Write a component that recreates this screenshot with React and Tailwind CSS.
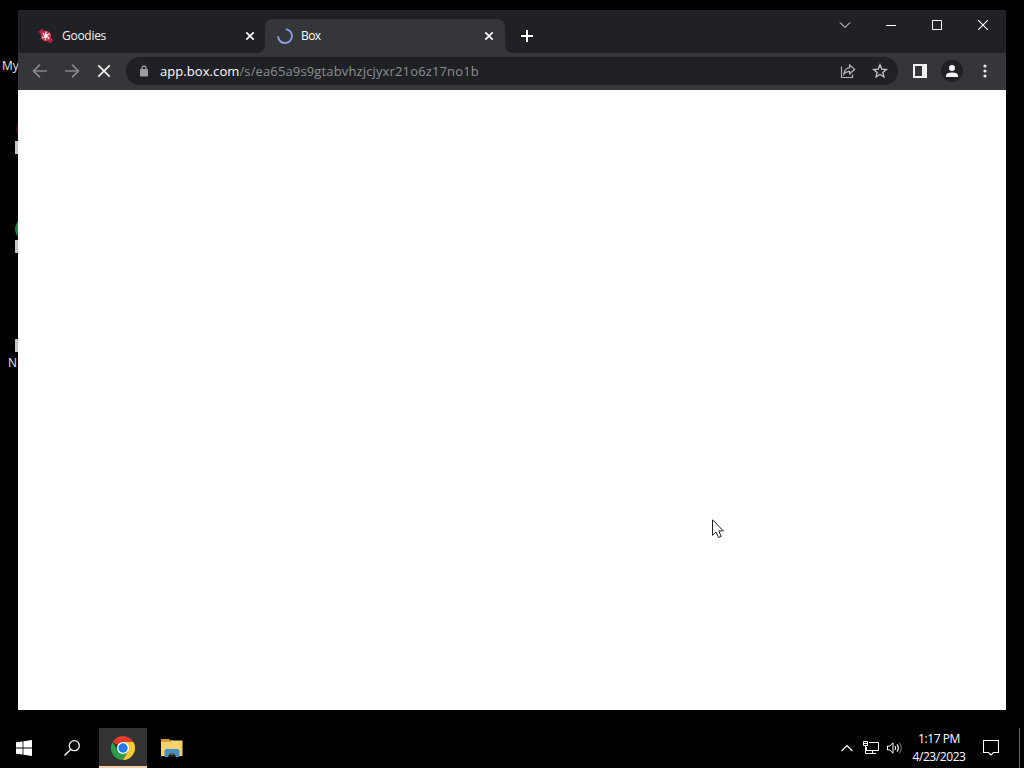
import React from "react";

const desktopItems = [
  { label: "My", className: "left-[2px] top-[59px]" },
  { label: "N", className: "left-[8px] top-[356px]" },
];

const shortcutMarks = ["top-[141px]", "top-[240px]", "top-[339px]"];

const CandyIcon = () => (
  <svg width="16" height="16" viewBox="0 0 16 16">
    <path d="M0.3 3.4L2.6 2.6L3 0.4L6.4 2.6L3 6.2Z" fill="#b52543" />
    <path d="M15.7 12.6L13.4 13.4L13 15.6L9.6 13.4L13 9.8Z" fill="#b52543" />
    <circle cx="8" cy="8" r="5.2" fill="#d8304e" />
    <path
      d="M8 8Q7 5.5 8.4 3.6M8 8Q9.4 5.8 11.8 6.2M8 8Q10.6 8.6 11 11M8 8Q8.6 10.6 7 12.2M8 8Q6 10 4 9.6M8 8Q5.4 7.4 5 5"
      fill="none"
      stroke="#f3dfe2"
      strokeWidth="1.3"
    />
    <circle cx="8" cy="8" r="1.4" fill="#fff" />
  </svg>
);

const Spinner = () => (
  <svg width="16" height="16" viewBox="0 0 16 16">
    <path
      d="M8.8 1.1A7 7 0 1 1 1 8.2"
      fill="none"
      stroke="#8a9fe6"
      strokeWidth="1.9"
    />
  </svg>
);

const CloseIcon = () => (
  <svg width="10" height="10" viewBox="0 0 10 10">
    <path d="M1.3 1.3L8.7 8.7M8.7 1.3L1.3 8.7" stroke="#fff" strokeWidth="1.7" />
  </svg>
);

const ArrowIcon = ({ flipped }) => (
  <svg
    width="16"
    height="16"
    viewBox="0 0 16 16"
    className={flipped ? "rotate-180" : ""}
  >
    <path
      d="M15 8H2M8 1.6L1.6 8L8 14.4"
      fill="none"
      stroke="#85878a"
      strokeWidth="1.7"
    />
  </svg>
);

const ChromeIcon = () => (
  <svg width="24" height="24" viewBox="0 0 24 24">
    <path d="M12 12L1.6 6A12 12 0 0 1 22.4 6Z" fill="#e33b2e" />
    <path d="M1.6 6L7 15L17.2 15L12 24A12 12 0 0 1 1.6 6Z" fill="#2a9c4a" />
    <path d="M17.2 15L12 24A12 12 0 0 0 22.4 6H12Z" fill="#fcc934" />
    <circle cx="12" cy="12" r="6" fill="#fff" />
    <circle cx="12" cy="12" r="4.7" fill="#2479e8" />
  </svg>
);

const FolderIcon = () => (
  <svg width="22" height="18" viewBox="0 0 22 18">
    <path d="M0 0H8L9.5 1.5H12V6H0Z" fill="#dc9c35" />
    <path d="M0 3H9L10.5 1.5H21.5V17H0Z" fill="#f3d36c" />
    <path
      d="M3.5 18V11.5L5 10H17L18.5 11.5V18H14.5V14H7.5V18Z"
      fill="#4690c4"
    />
    <path d="M7.5 14H14.5V15.5H7.5Z" fill="#2f6f9f" />
    <path d="M7.5 15.5H14.5V18H7.5Z" fill="#1a1a14" />
  </svg>
);

const TabStrip = () => (
  <div className="flex h-[43px] bg-[#202124]">
    <div className="mt-[9px] flex h-[34px] w-[247px] items-center pr-[10px] pl-5">
      <CandyIcon />
      <span className="ml-2 flex-1 text-[12px] tracking-[-0.28px] text-[#f1f2f3]">Goodies</span>
      <CloseIcon />
    </div>
    <div className="relative mt-[9px] flex h-[34px] w-[240px] items-center rounded-t-lg bg-[#35363a] pr-[11px] pl-3">
      <Spinner />
      <span className="ml-2 flex-1 text-[12px] tracking-[-0.6px] text-white">Box</span>
      <CloseIcon />
      {/* Curved feet of the active tab */}
      <svg className="absolute bottom-0 -left-2" width="8" height="8">
        <path d="M8 0A8 8 0 0 1 0 8H8Z" fill="#35363a" />
      </svg>
      <svg className="absolute -right-2 bottom-0" width="8" height="8">
        <path d="M0 0A8 8 0 0 0 8 8H0Z" fill="#35363a" />
      </svg>
    </div>
    <div className="mt-[9px] flex h-[34px] w-11 items-center justify-center">
      <svg width="12" height="12" viewBox="0 0 12 12">
        <path d="M6 0V12M0 6H12" stroke="#fff" strokeWidth="2" />
      </svg>
    </div>
    <div className="ml-auto flex h-[30px]">
      <div className="flex w-[46px] items-center justify-center">
        <svg width="12" height="12" viewBox="0 0 12 12">
          <path d="M1 3.5L6 8.5L11 3.5" fill="none" stroke="#fff" />
        </svg>
      </div>
      <div className="flex w-[46px] items-center justify-center">
        <svg width="10" height="10" viewBox="0 0 10 10">
          <path d="M0 5.5H10" stroke="#fff" />
        </svg>
      </div>
      <div className="flex w-[46px] items-center justify-center">
        <svg width="10" height="10" viewBox="0 0 10 10">
          <path d="M0.5 0.5H9.5V9.5H0.5Z" fill="none" stroke="#fff" />
        </svg>
      </div>
      <div className="flex w-[46px] items-center justify-center">
        <svg width="10" height="10" viewBox="0 0 10 10">
          <path d="M0 0L10 10M10 0L0 10" stroke="#fff" strokeWidth="1.1" />
        </svg>
      </div>
    </div>
  </div>
);

const Toolbar = () => (
  <div className="flex h-[37px] items-center bg-[#35363a] px-[6px] pb-px">
    <div className="flex w-8 justify-center">
      <ArrowIcon />
    </div>
    <div className="flex w-8 justify-center">
      <ArrowIcon flipped />
    </div>
    <div className="flex w-8 justify-center">
      <svg width="14" height="14" viewBox="0 0 14 14">
        <path d="M1.3 1.3L12.7 12.7M12.7 1.3L1.3 12.7" stroke="#f1f1f1" strokeWidth="1.7" />
      </svg>
    </div>

    <div className="ml-[6px] flex h-7 w-[772px] items-center rounded-full bg-[#202124] pr-[2px] pl-[14px]">
      <svg width="8" height="12" viewBox="0 0 8 12" className="mb-px">
        <path d="M2 5V3A2 2 0 0 1 6 3V5" fill="none" stroke="#9a9c9f" strokeWidth="1.3" />
        <rect x="0" y="4" width="8" height="7.5" rx="0.8" fill="#9a9c9f" />
      </svg>
      <span className="ml-3 flex-1 pt-[2px] text-[13px] whitespace-nowrap text-[#8b8d91]">
        <span className="tracking-[0.07px] text-white">app.box.com</span>
        <span className="tracking-[0.14px]">/s/ea65a9s9gtabvhzjcjyxr21o6z17no1b</span>
      </span>
      <div className="flex w-8 justify-center">
        <svg width="16" height="16" viewBox="0 0 16 16">
          <path
            d="M1.5 3.5V14.5H12.5V11.5M9.6 2L14.6 6.4L9.6 10.8V8.4Q6 8.2 3.8 11.2Q4.4 5.4 9.6 4.7Z"
            fill="none"
            stroke="#b4b6b9"
            strokeWidth="1.2"
          />
        </svg>
      </div>
      <div className="flex w-8 justify-center">
        <svg width="16" height="16" viewBox="0 0 16 16">
          <path
            d="M8 1.9L9.8 6.1L14.3 6.5L10.9 9.5L11.9 13.9L8 11.5L4.1 13.9L5.1 9.5L1.7 6.5L6.2 6.1Z"
            fill="none"
            stroke="#bfc1c4"
            strokeWidth="1.4"
          />
        </svg>
      </div>
    </div>

    <div className="ml-[6px] flex w-8 justify-center">
      <svg width="14" height="14" viewBox="0 0 14 14">
        <path d="M0 0H14V14H0ZM2 2V12H9V2Z" fill="#f1f3f4" fillRule="evenodd" />
      </svg>
    </div>
    <div className="flex w-8 justify-center">
      <div className="flex size-[22px] items-center justify-center rounded-full bg-[#202124]">
        <svg width="12" height="12" viewBox="0 0 12 12">
          <circle cx="6" cy="3" r="3" fill="#f1f3f4" />
          <path d="M0 12V10.4Q0 7.4 6 7.4Q12 7.4 12 10.4V12Z" fill="#f1f3f4" />
        </svg>
      </div>
    </div>
    <div className="flex w-8 justify-center pl-px">
      <svg width="4" height="14" viewBox="0 0 4 14">
        <circle cx="2" cy="2" r="1.6" fill="#e8eaed" />
        <circle cx="2" cy="7" r="1.6" fill="#e8eaed" />
        <circle cx="2" cy="12" r="1.6" fill="#e8eaed" />
      </svg>
    </div>
  </div>
);

const Taskbar = () => (
  <div className="flex h-10 items-center bg-black text-white">
    <div className="flex w-12 justify-center">
      <svg width="16" height="16" viewBox="0 0 16 16">
        <path
          d="M0 2.3L6.6 1.4V7.5H0ZM7.4 1.3L16 0V7.5H7.4ZM0 8.4H6.6V14.6L0 13.7ZM7.4 8.4H16V16L7.4 14.7Z"
          fill="#fff"
        />
      </svg>
    </div>
    <div className="flex w-12 justify-center">
      <svg width="16" height="16" viewBox="0 0 16 16">
        <circle cx="10.3" cy="5.7" r="5" fill="none" stroke="#fff" strokeWidth="1.3" />
        <path d="M6.8 9.2L0.5 15.5" stroke="#fff" strokeWidth="1.4" />
      </svg>
    </div>
    <div className="ml-[3px] flex h-10 w-12 items-center justify-center border-b-2 border-[#f9cba0] bg-[#333333] pt-[2px]">
      <ChromeIcon />
    </div>
    <div className="flex w-[50px] justify-center">
      <FolderIcon />
    </div>

    <div className="ml-auto flex h-10 items-center">
      <svg width="12" height="8" viewBox="0 0 12 8">
        <path d="M0.6 7L6 1.6L11.4 7" fill="none" stroke="#fff" strokeWidth="1.3" />
      </svg>
      <svg className="ml-[10px]" width="16" height="14" viewBox="0 0 16 14">
        <path d="M6 1.5H15.5V9.5H3.5V6M9.5 9.5V12.5M5 12.5H13" fill="none" stroke="#fff" />
        <path d="M0.5 0.5H4.5V4.5H0.5ZM2.5 4.5V12.5H5" fill="none" stroke="#fff" />
        <path d="M1 2.5H4" stroke="#fff" />
      </svg>
      <svg className="ml-2" width="16" height="14" viewBox="0 0 16 14">
        <path d="M0.5 5H2.8L6 1.8V12.2L2.8 9H0.5Z" fill="none" stroke="#fff" />
        <path d="M8 5Q9.4 7 8 9M10 3.3Q12.6 7 10 10.7" fill="none" stroke="#fff" strokeWidth="1.2" />
        <path d="M12.2 1.5Q16.4 7 12.2 12.5" fill="none" stroke="#777" />
      </svg>
      <div className="ml-[5px] flex w-[62px] flex-col items-center text-[12px] leading-[18px] tracking-[-0.42px] whitespace-nowrap">
        <span>1:17 PM</span>
        <span>4/23/2023</span>
      </div>
      <svg className="ml-[13px]" width="16" height="16" viewBox="0 0 16 16">
        <path
          d="M0.5 0.5H15.5V12.5H10.5L8 15L5.5 12.5H0.5Z"
          fill="none"
          stroke="#fff"
          strokeWidth="1.1"
        />
      </svg>
      <div className="ml-5 h-10 w-[5px] border-l border-[#666]" />
    </div>
  </div>
);

const App = () => {
  return (
    <div className="relative flex h-[768px] w-[1024px] flex-col overflow-hidden bg-black font-['Open_Sans','Noto_Sans',sans-serif]">
      {/* Desktop icons peeking out from behind the window */}
      {desktopItems.map((item) => (
        <span
          key={item.label}
          className={`absolute text-[12px] leading-[14px] text-[#e6e6e6] ${item.className}`}
        >
          {item.label}
        </span>
      ))}
      {shortcutMarks.map((top) => (
        <div key={top} className={`absolute left-[15px] h-[13px] w-[3px] bg-[#c9c5c2] ${top}`} />
      ))}
      <div className="absolute top-[119px] left-[16px] h-5 w-5 rounded-full bg-[#3d1014]" />
      <div className="absolute top-[218px] left-[15px] h-[22px] w-[22px] rounded-full bg-[#2c7a45]" />

      <div className="relative mt-[10px] ml-[18px] flex h-[700px] w-[988px] flex-col">
        <TabStrip />
        <Toolbar />
        <div className="flex-1 bg-white" />
      </div>

      <div className="mt-auto">
        <Taskbar />
      </div>

      {/* Mouse pointer */}
      <svg className="absolute top-[519px] left-[712px]" width="12" height="20" viewBox="0 0 12 20">
        <path
          d="M0.5 0.8V16.3L4 12.9L6.6 18.5L9.2 17.4L6.8 11.9H11.4Z"
          fill="#fff"
          stroke="#222"
        />
      </svg>
    </div>
  );
};

export default App;
